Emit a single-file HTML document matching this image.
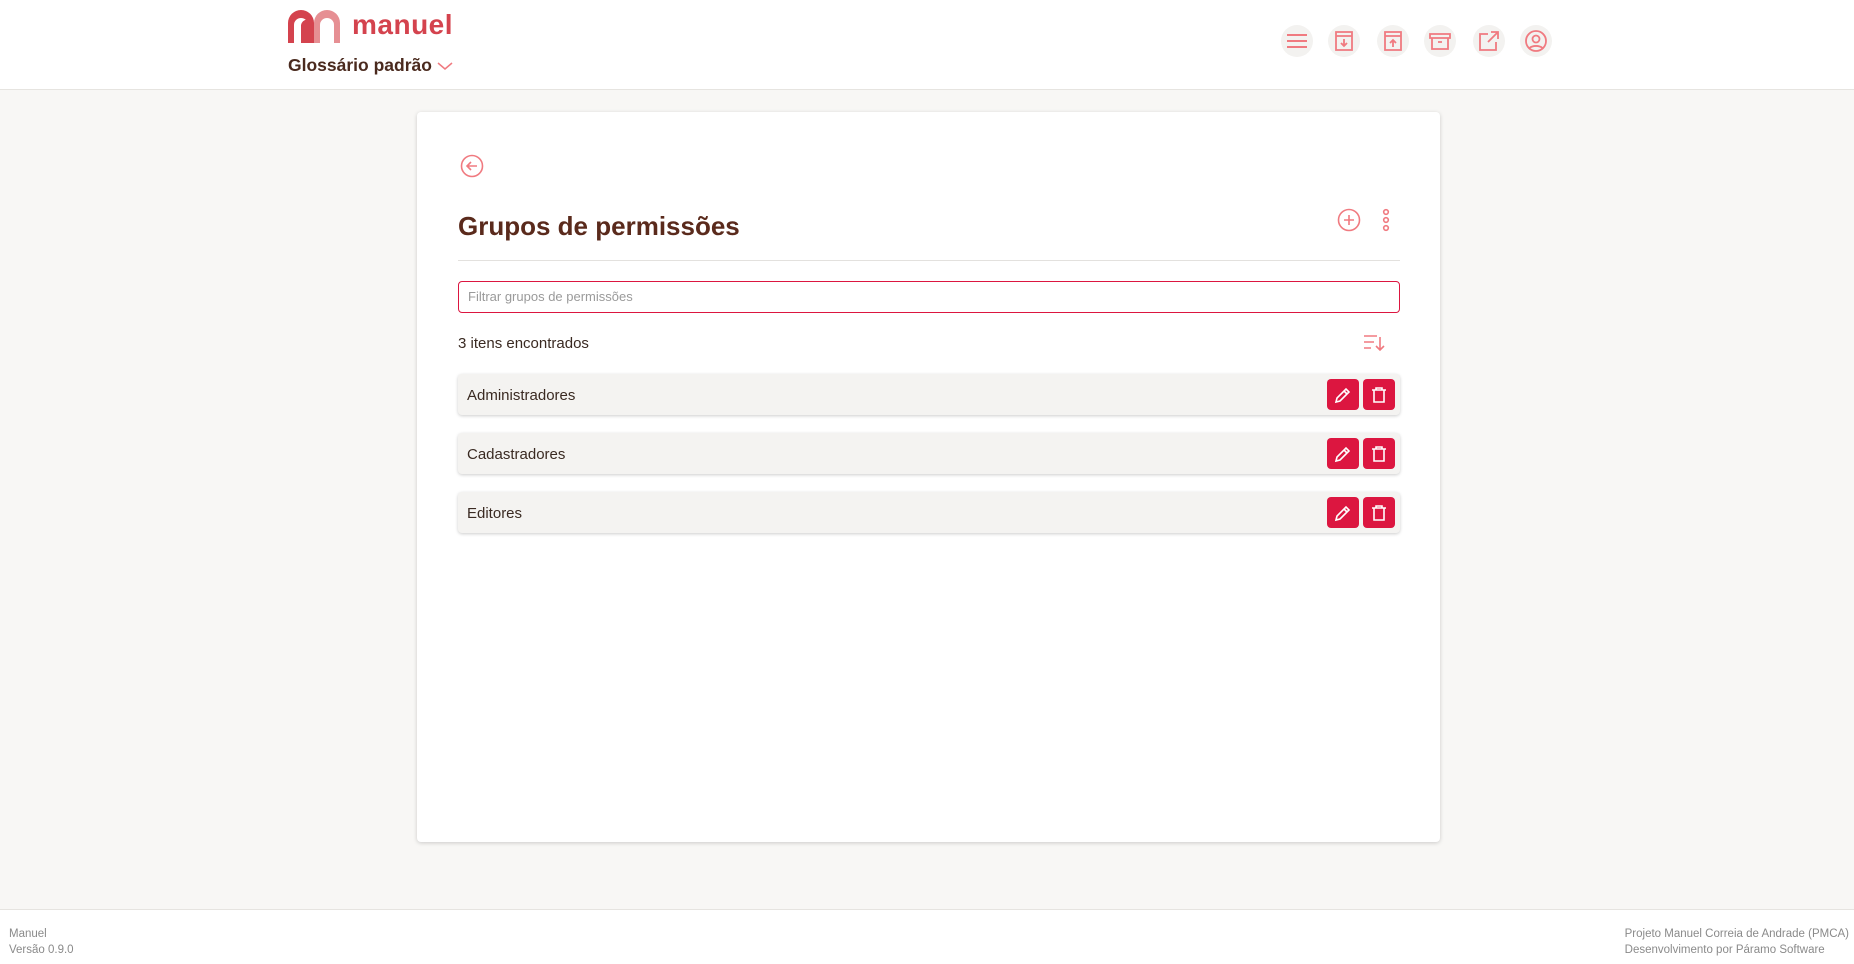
<!DOCTYPE html>
<html><head><meta charset="utf-8"><style>
*{box-sizing:border-box;margin:0;padding:0}
body{width:1854px;height:964px;background:#f8f7f5;font-family:"Liberation Sans",sans-serif;position:relative;overflow:hidden;color:#3a2a22}
.hdr{position:absolute;left:0;top:0;width:1854px;height:90px;background:#fff;border-bottom:1px solid #e6e4e0}
.ic{position:absolute;width:32px;height:32px;border-radius:50%;background:#f3f2f0;top:25px}
.ic svg{position:absolute;left:4px;top:4px}
.card{position:absolute;left:417px;top:112px;width:1023px;height:730px;background:#fff;border-radius:4px;box-shadow:0 1px 4px rgba(0,0,0,.18)}
.row{position:absolute;left:458px;width:942px;height:41px;background:#f4f3f1;border-radius:4px;box-shadow:0 1px 3px rgba(0,0,0,.2)}
.row span{position:absolute;left:9px;top:13px;font-size:15px;color:#3a2a22}
.b{position:absolute;top:5px;width:32px;height:31px;background:#dc1640;border-radius:4px}
.b svg{position:absolute;left:7px;top:7px}
.ft{position:absolute;left:0;top:909px;width:1854px;height:55px;background:#fff;border-top:1px solid #e6e4e0;font-size:11.5px;color:#8a8a8a;line-height:16px}
</style></head><body>
<div class="hdr">
<svg style="position:absolute;left:288px;top:9px" width="56" height="34" viewBox="0 0 56 34">
<path d="M0 34V14A13 13 0 0 1 26 14V34H20V16A7 7 0 0 0 6 16V34Z" fill="#d4434e"/>
<path d="M26 34V14A13 13 0 0 1 52 14V34H46V16A7 7 0 0 0 32 16V34Z" fill="#e68f93"/>
<path d="M13 34V16A7 7 0 0 1 26 14V34Z" fill="#d4434e"/>
</svg>
<div style="position:absolute;left:352px;top:9px;font-size:28px;font-weight:bold;color:#d4434e;letter-spacing:0.5px">manuel</div>
<div style="position:absolute;left:288px;top:55px;font-size:17.5px;font-weight:bold;color:#4a2a1e">Glossário padrão</div>
<svg style="position:absolute;left:437px;top:61px" width="16" height="10"><path d="M1 2l7 6 7-6" fill="none" stroke="#f07a80" stroke-width="1.5"/></svg>
<div class="ic" style="left:1281px"><svg width="24" height="24" fill="none" stroke="#f07a80" stroke-width="2"><path d="M2 6h20M2 12h20M2 18h20"/></svg></div>
<div class="ic" style="left:1328px"><svg width="24" height="24" fill="none" stroke="#f07a80" stroke-width="1.8"><path d="M4 3h16v18H4zM4 7h16M12 10v7M9 14l3 3 3-3"/></svg></div>
<div class="ic" style="left:1377px"><svg width="24" height="24" fill="none" stroke="#f07a80" stroke-width="1.8"><path d="M4 3h16v18H4zM4 7h16M12 18v-7M9 14l3-3 3 3"/></svg></div>
<div class="ic" style="left:1424px"><svg width="24" height="24" fill="none" stroke="#f07a80" stroke-width="1.8"><path d="M2 5h20v4H2zM4 9v11h16V9M10 13h4"/></svg></div>
<div class="ic" style="left:1473px"><svg width="24" height="24" fill="none" stroke="#f07a80" stroke-width="1.8"><path d="M11 5H3v16h16v-8M14 3h7v7M21 3l-10 10"/></svg></div>
<div class="ic" style="left:1520px"><svg width="24" height="24" fill="none" stroke="#f07a80" stroke-width="1.8"><circle cx="12" cy="12" r="10"/><circle cx="12" cy="10" r="3.5"/><path d="M5.5 19a8 5 0 0 1 13 0"/></svg></div>
</div>
<div class="card"></div>
<svg style="position:absolute;left:460px;top:154px" width="24" height="24" fill="none" stroke="#f07a80" stroke-width="1.6"><circle cx="12" cy="12" r="10.5"/><path d="M17 12H7M11 8l-4 4 4 4"/></svg>
<div style="position:absolute;left:458px;top:211px;font-size:26px;font-weight:bold;color:#5a2a1c">Grupos de permissões</div>
<svg style="position:absolute;left:1337px;top:208px" width="24" height="24" fill="none" stroke="#f07a80" stroke-width="1.6"><circle cx="12" cy="12" r="10.5"/><path d="M12 7v10M7 12h10"/></svg>
<svg style="position:absolute;left:1380px;top:207px" width="12" height="26" fill="none" stroke="#f07a80" stroke-width="1.6"><circle cx="6" cy="5" r="2.3"/><circle cx="6" cy="13" r="2.3"/><circle cx="6" cy="21" r="2.3"/></svg>
<div style="position:absolute;left:458px;top:260px;width:942px;height:1px;background:#e3e1de"></div>
<div style="position:absolute;left:458px;top:281px;width:942px;height:32px;border:1px solid #dc1640;border-radius:4px;font-size:13px;color:#9a9a9a;padding:7px 9px">Filtrar grupos de permissões</div>
<div style="position:absolute;left:458px;top:335px;font-size:15px;color:#3a2a22">3 itens encontrados</div>
<svg style="position:absolute;left:1362px;top:333px" width="24" height="20" fill="none" stroke="#f07a80" stroke-width="1.6"><path d="M2 3h13M2 9h10M2 15h7M18 4v13M14 13l4 4 4-4"/></svg>
<div class="row" style="top:374px"><span>Administradores</span><div class="b" style="left:869px"><svg width="18" height="18" fill="none" stroke="#fff" stroke-width="1.6"><path d="M2 16l1-4 9-9 3 3-9 9zM10 5l3 3"/></svg></div><div class="b" style="left:905px"><svg width="18" height="18" fill="none" stroke="#fff" stroke-width="1.6"><path d="M2 4h14M6 4V2h6v2M4 4v12h10V4"/></svg></div></div>
<div class="row" style="top:433px"><span>Cadastradores</span><div class="b" style="left:869px"><svg width="18" height="18" fill="none" stroke="#fff" stroke-width="1.6"><path d="M2 16l1-4 9-9 3 3-9 9zM10 5l3 3"/></svg></div><div class="b" style="left:905px"><svg width="18" height="18" fill="none" stroke="#fff" stroke-width="1.6"><path d="M2 4h14M6 4V2h6v2M4 4v12h10V4"/></svg></div></div>
<div class="row" style="top:492px"><span>Editores</span><div class="b" style="left:869px"><svg width="18" height="18" fill="none" stroke="#fff" stroke-width="1.6"><path d="M2 16l1-4 9-9 3 3-9 9zM10 5l3 3"/></svg></div><div class="b" style="left:905px"><svg width="18" height="18" fill="none" stroke="#fff" stroke-width="1.6"><path d="M2 4h14M6 4V2h6v2M4 4v12h10V4"/></svg></div></div>
<div class="ft">
<div style="position:absolute;left:9px;top:16px">Manuel<br>Versão 0.9.0</div>
<div style="position:absolute;right:5px;top:16px">Projeto Manuel Correia de Andrade (PMCA)<br>Desenvolvimento por Páramo Software</div>
</div>
</body></html>
